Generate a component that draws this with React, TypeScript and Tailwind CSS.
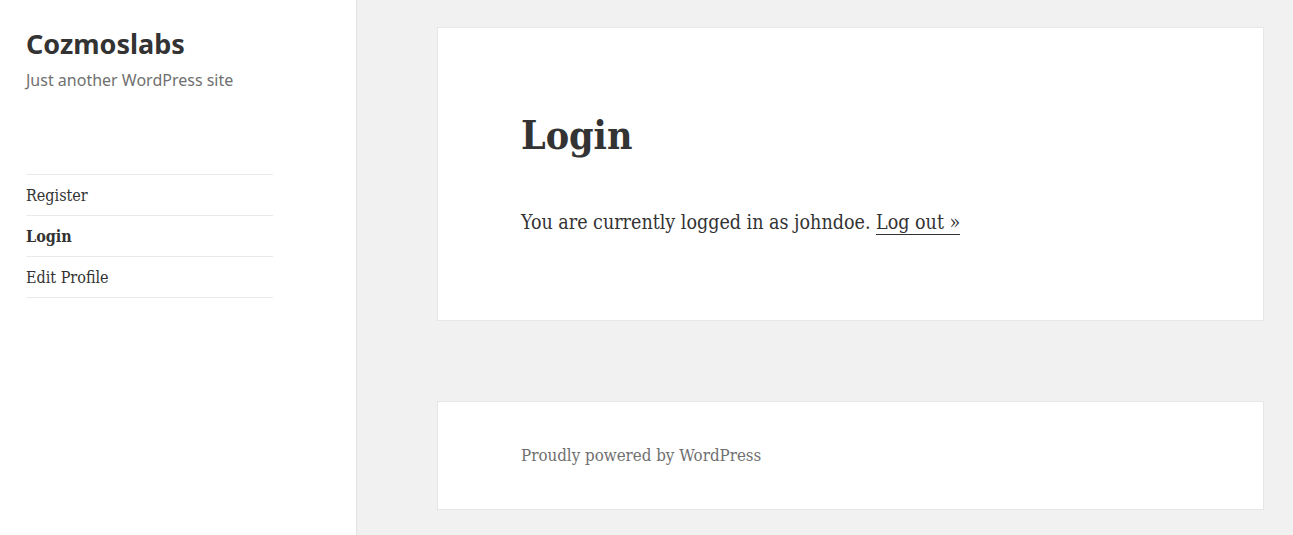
import React from "react";

const serif = { fontFamily: '"DejaVu Serif Condensed", "DejaVu Serif", "Liberation Serif", serif' };

function NavItem({ label, active }: { label: string; active?: boolean }) {
  return (
    <li className="border-b border-[#eaeaea]">
      <a
        href="#"
        className={`block h-[40px] pt-[1px] leading-[40px] text-[16px] text-[#333] ${active ? "font-bold" : ""}`}
        style={serif}
      >
        {label}
      </a>
    </li>
  );
}

export default function App() {
  return (
    <div className="flex min-h-[535px] w-full bg-[#f1f1f1] text-[#333]">
      <aside className="w-[357px] shrink-0 border-r border-[#e3e3e3] bg-white px-[26px] pt-[27px]">
        <h1
          className="text-[27px] font-bold leading-[34px] text-[#333]"
          style={{ fontFamily: '"Noto Sans", sans-serif' }}
        >
          Cozmoslabs
        </h1>
        <p
          className="mt-[8px] text-[16px] leading-[22px] text-[#707070]"
          style={{ fontFamily: '"Noto Sans", sans-serif' }}
        >
          Just another WordPress site
        </p>
        <ul className="mt-[83px] w-[247px] border-t border-[#eaeaea]">
          <NavItem label="Register" />
          <NavItem label="Login" active />
          <NavItem label="Edit Profile" />
        </ul>
      </aside>
      <main className="flex-1 pl-[80px] pr-[29px] pt-[27px]">
        <article className="h-[294px] border border-[#e6e6e6] bg-white px-[83px] pt-[83px]">
          <h2 className="text-[39px] font-bold leading-[48px]" style={serif}>
            Login
          </h2>
          <p className="mt-[49px] text-[19.5px] leading-[30px]" style={serif}>
            You are currently logged in as johndoe.{" "}
            <a href="#" className="border-b border-[#333] text-[#333]">
              Log out »
            </a>
          </p>
        </article>
        <footer className="mt-[80px] h-[109px] border border-[#e6e6e6] bg-white px-[83px] pt-[41px]">
          <p className="text-[16.8px] leading-[24px] text-[#707070]" style={serif}>
            Proudly powered by WordPress
          </p>
        </footer>
      </main>
    </div>
  );
}
